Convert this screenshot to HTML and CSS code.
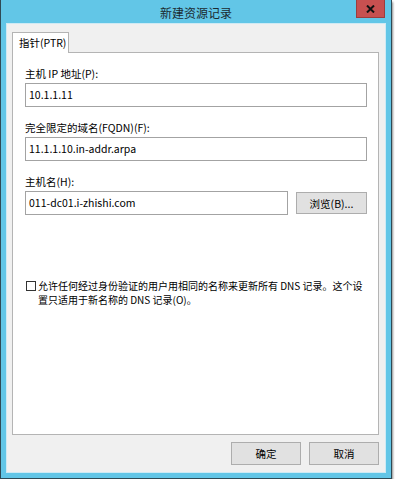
FILE: index.html
```html
<!DOCTYPE html>
<html lang="zh-CN">

<head>
    <meta charset="UTF-8">
    <title>新建资源记录</title>
    <link rel="stylesheet" href="styles.css">
</head>

<body>
    <div class="window">
        <div class="titlebar">
            <span class="title">新建资源记录</span>
            <div class="close">
                <svg width="9" height="8" viewBox="0 0 9 8">
                    <path d="M1 0.5 L8 7.5 M8 0.5 L1 7.5" stroke="#111" stroke-width="2" fill="none"/>
                </svg>
            </div>
        </div>
        <div class="client">
            <div class="tabs">
                <div class="tab">指针(PTR)</div>
            </div>
            <div class="panel">
                <div class="field">
                    <div class="label">主机 IP 地址(P):</div>
                    <div class="input">10.1.1.11</div>
                </div>
                <div class="field">
                    <div class="label">完全限定的域名(FQDN)(F):</div>
                    <div class="input">11.1.1.10.in-addr.arpa</div>
                </div>
                <div class="field">
                    <div class="label">主机名(H):</div>
                    <div class="row">
                        <div class="input grow">011-dc01.i-zhishi.com</div>
                        <div class="btn browse">浏览(B)...</div>
                    </div>
                </div>
                <div class="check">
                    <span class="box"></span>
                    <span class="check-text">允许任何经过身份验证的用户用相同的名称来更新所有 DNS 记录。这个设<br>置只适用于新名称的 DNS 记录(O)。</span>
                </div>
            </div>
            <div class="footer">
                <div class="btn">确定</div>
                <div class="btn">取消</div>
            </div>
        </div>
    </div>
</body>

</html>
```

FILE: styles.css
```css
* {
    margin: 0;
    padding: 0;
    box-sizing: border-box;
}
body {
    background: #fff;
    font-family: "Noto Sans CJK SC", "Noto Sans", sans-serif;
    font-size: 10.5px;
    color: #000;
}
.window {
    width: 392px;
    height: 479px;
    border: 1px solid #2f4a55;
    border-top: none;
    background: #62c6e7;
    padding: 0 5px 5px;
    display: flex;
    flex-direction: column;
    box-shadow: 1px 2px 2px rgba(0, 0, 0, 0.45);
}
.titlebar {
    position: relative;
    height: 23px;
    padding-top: 2px;
    display: flex;
    justify-content: center;
    align-items: center;
}
.title {
    font-size: 12px;
    color: #1b2a30;
}
.close {
    position: absolute;
    top: 0;
    right: 1px;
    width: 29px;
    height: 18px;
    background: #c75050;
    border: 1px solid #9c3d3d;
    border-top: none;
    display: flex;
    justify-content: center;
    align-items: center;
}
.client {
    flex: 1;
    border: 1px solid #cfeaf4;
    background: #f0f0f0;
    padding: 8px 6px 6px 5px;
    display: flex;
    flex-direction: column;
}
.tabs {
    display: flex;
    height: 20px;
}
.tab {
    width: 57px;
    height: 21px;
    border: 1px solid #b4b4b4;
    border-bottom: none;
    background: #fff;
    padding-left: 6px;
    line-height: 20px;
    position: relative;
    z-index: 1;
}
.panel {
    height: 383px;
    border: 1px solid #b4b4b4;
    background: #fff;
    padding: 13px 11px 0 12px;
}
.field {
    margin-bottom: 13px;
}
.label {
    line-height: 16px;
    margin-bottom: 1px;
}
.input {
    height: 24px;
    border: 1px solid #a3a3a3;
    background: #fff;
    padding-left: 3px;
    line-height: 21px;
}
.row {
    display: flex;
    gap: 8px;
}
.grow {
    flex: 1;
}
.btn {
    width: 70px;
    height: 23px;
    border: 1px solid #adadad;
    background: #e1e1e1;
    display: flex;
    justify-content: center;
    align-items: center;
}
.browse {
    margin-top: 1px;
    height: 22px;
    width: 71px;
}
.check {
    display: flex;
    align-items: flex-start;
    margin-top: 64px;
    padding-left: 1px;
}
.box {
    width: 10px;
    height: 10px;
    border: 1px solid #333;
    background: #fff;
    margin-top: 2px;
    margin-right: 2px;
    flex-shrink: 0;
}
.check-text {
    font-size: 10px;
    line-height: 14px;
    white-space: nowrap;
}
.footer {
    display: flex;
    justify-content: flex-end;
    gap: 8px;
    margin-top: 7px;
}
```
